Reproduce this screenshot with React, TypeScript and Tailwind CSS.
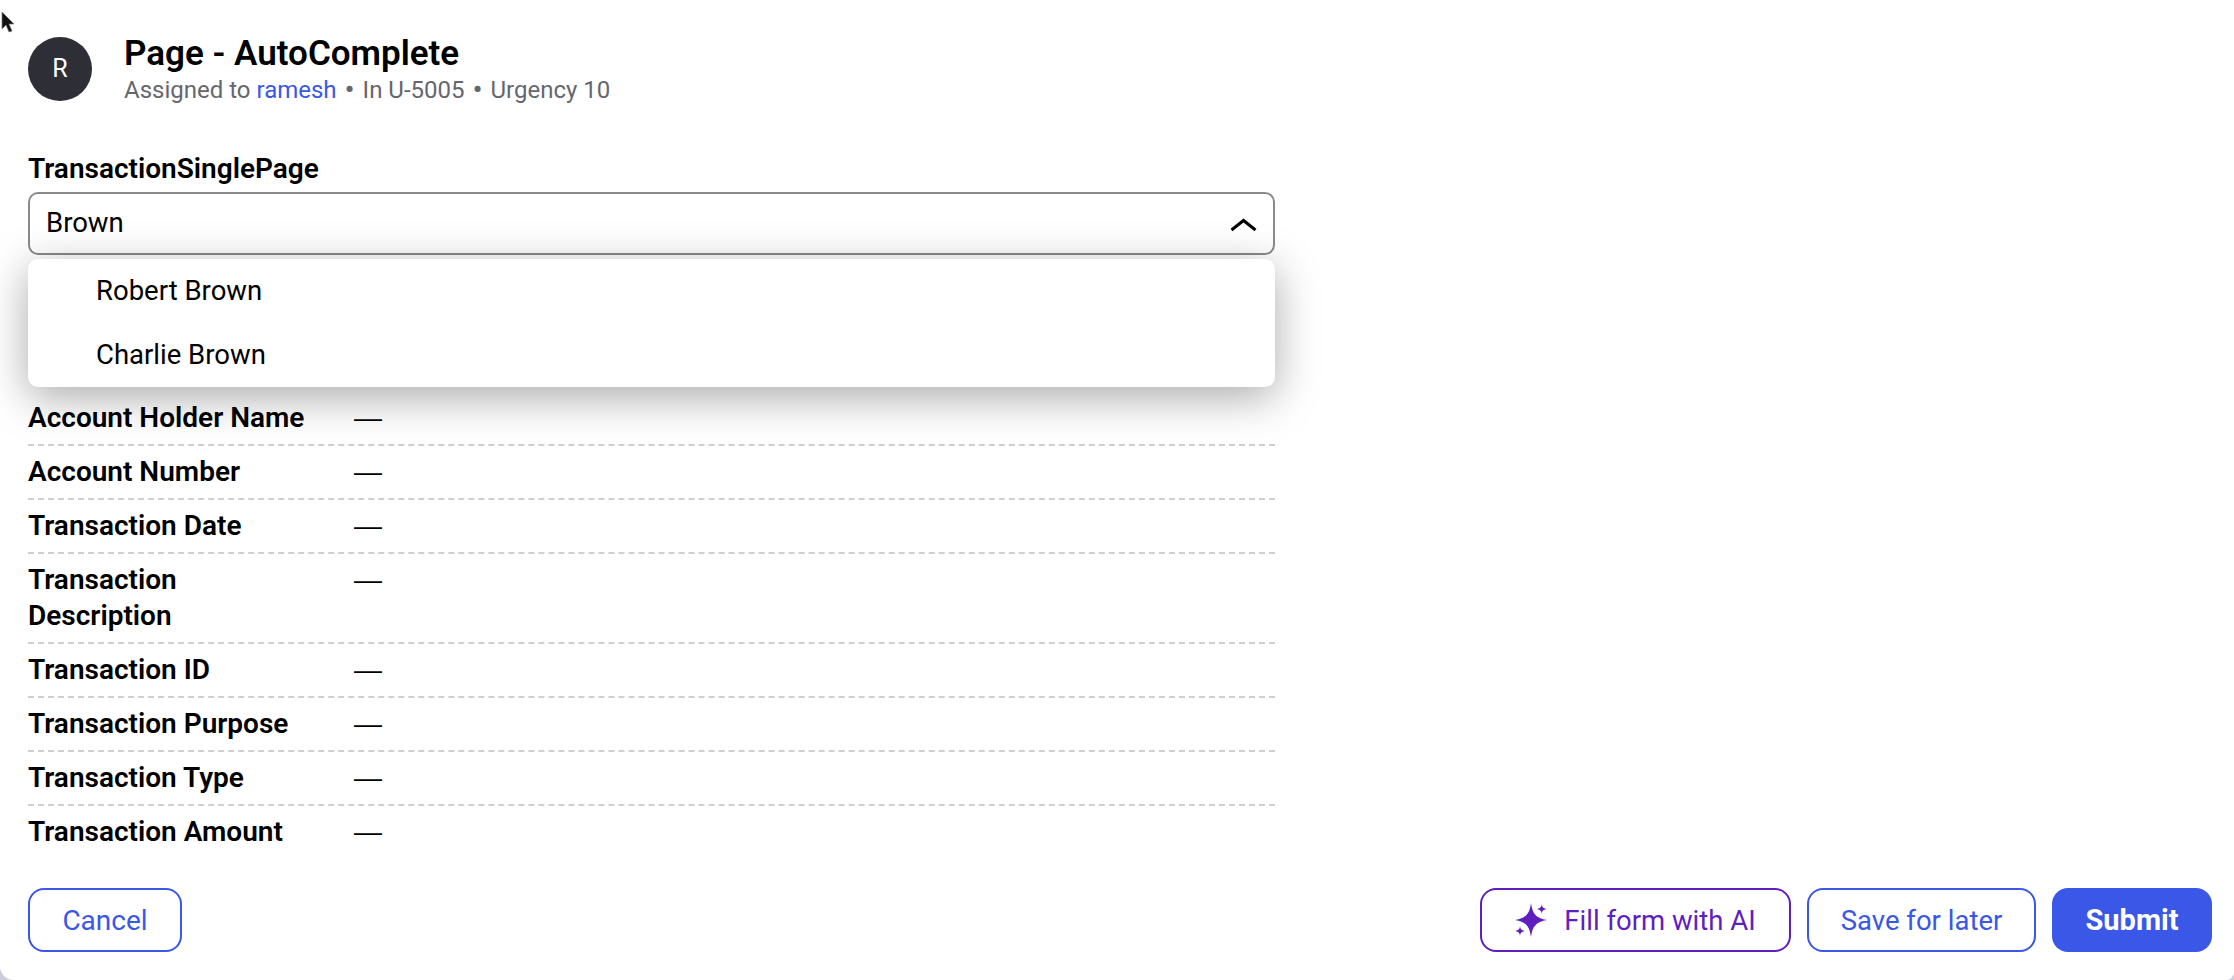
const Row = ({ label }: { label: string }) => (
  <div className="grid grid-cols-[290px_1fr] gap-x-[36px] border-b-2 border-dashed border-[#cfcfcf] last:border-b-0 py-[8px] text-[28px] leading-[36px] text-black">
    <div className="font-semibold">{label}</div>
    <div className="font-['Liberation_Sans',sans-serif]">—</div>
  </div>
);

const rows = [
  "Account Holder Name",
  "Account Number",
  "Transaction Date",
  "Transaction Description",
  "Transaction ID",
  "Transaction Purpose",
  "Transaction Type",
  "Transaction Amount",
];

const Dot = () => <span className="mx-[2px] align-[-2px] text-[30px] leading-none">•</span>;

export default function App() {
  return (
    <div className="relative h-[980px] w-[2234px] overflow-hidden bg-[#cccfdb] font-['Roboto',sans-serif]">
      <div className="flex h-full flex-col rounded-bl-[14px] rounded-br-[8px] bg-white px-[28px] pt-[37px]">
        <svg className="absolute left-[1px] top-[11px] blur-[0.5px]" width="14" height="24" viewBox="0 0 14 24">
          <path d="M1 1 L1 18 L5 14 L8 21 L11 20 L8 13 L13 13 Z" fill="#111" stroke="#777" strokeWidth="0.7" />
        </svg>
        <header className="flex items-start gap-[32px]">
          <div className="flex h-[64px] w-[64px] items-center justify-center rounded-full bg-[#2e2e36] text-[25px] text-white">R</div>
          <div className="-mt-[1px]">
            <h1 className="text-[35px] font-semibold leading-[36px] text-black">Page - AutoComplete</h1>
            <p className="text-[24px] leading-[36px] text-[#66666e]">
              Assigned to <span className="text-[#3a57e8]">ramesh</span> <Dot /> In U-5005 <Dot /> Urgency 10
            </p>
          </div>
        </header>
        <div className="w-[1247px]">
          <div className="mt-[43px] text-[28px] font-semibold leading-[36px] text-black">TransactionSinglePage</div>
          <div className="relative mt-[5px]">
            <div className="flex h-[63px] items-center justify-between rounded-[10px] border-2 border-[#8a8a8a] px-[16px] text-[27.5px] text-black">
              <span className="pb-[2px]">Brown</span>
              <svg width="28" height="16" viewBox="0 0 28 16" fill="none">
                <path d="M2.5 14 L14.5 4.5 L26.5 14" stroke="#000" strokeWidth="3" />
              </svg>
            </div>
            <div className="absolute left-0 right-0 top-[67px] z-10 flex h-[128px] flex-col rounded-[10px] bg-white text-[27.5px] text-black shadow-[0_10px_44px_rgba(0,0,0,0.34)]">
              <div className="flex h-[64px] items-center pl-[68px]">Robert Brown</div>
              <div className="flex h-[64px] items-center pl-[68px]">Charlie Brown</div>
            </div>
          </div>
          <div className="mt-[137px]">
            {rows.map((r) => (
              <Row key={r} label={r} />
            ))}
          </div>
        </div>
        <footer className="absolute bottom-[28px] left-[28px] right-[22px] flex items-center justify-between text-[27.5px]">
          <button className="flex h-[64px] w-[154px] items-center justify-center rounded-[16px] border-2 border-[#3a57e8] pt-[2px] text-[28px] text-[#3a57e8]">Cancel</button>
          <div className="flex gap-[16px]">
            <button className="flex h-[64px] w-[311px] items-center justify-center gap-[17px] rounded-[16px] border-2 border-[#5f1fbf] text-[#5f1fbf]">
              <svg width="32" height="36" viewBox="0 0 32 36" fill="#5f1fbf">
                <path d="M16 1 C17.5 12 21 16 32 18 C21 20 17.5 24 16 35 C14.5 24 11 20 0 18 C11 16 14.5 12 16 1 Z" />
                <path d="M26.7 2 C27 5 28 6 31.2 7 C28 8 27 9 26.7 12 C26.4 9 25.4 8 22.2 7 C25.4 6 26.4 5 26.7 2 Z" />
                <path d="M5 24 C5.3 27 6.3 28 9.5 29 C6.3 30 5.3 31 5 34 C4.7 31 3.7 30 0.5 29 C3.7 28 4.7 27 5 24 Z" />
              </svg>
              <span className="pt-[2px]">Fill form with AI</span>
            </button>
            <button className="flex h-[64px] w-[229px] items-center justify-center rounded-[16px] border-2 border-[#3a57e8] pt-[2px] text-[#3a57e8]">Save for later</button>
            <button className="flex h-[64px] w-[160px] items-center justify-center rounded-[16px] bg-[#3a57e8] pt-[2px] text-[29px] font-bold text-white">Submit</button>
          </div>
        </footer>
      </div>
    </div>
  );
}
